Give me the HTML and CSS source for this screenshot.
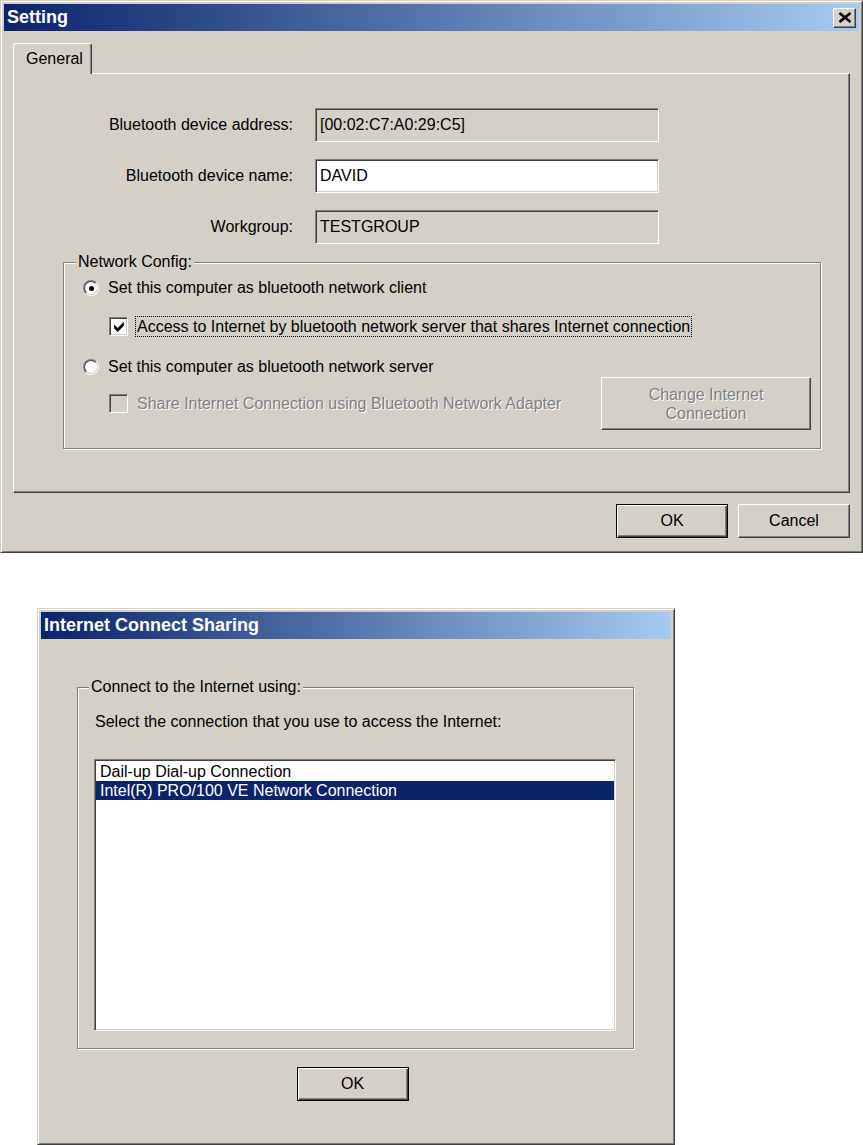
FILE: index.html
```html
<!DOCTYPE html>
<html lang="en">
<head>
  <meta charset="UTF-8" />
  <title>Setting</title>
  <link rel="stylesheet" href="styles.css">
</head>
<body>

  <!-- Setting dialog -->
  <div class="window setting">
    <div class="titlebar">
      <span class="title">Setting</span>
      <button class="close-btn" aria-label="Close">
        <svg width="14" height="11" viewBox="0 0 14 11">
          <path d="M1.5 1 L12.5 10 M12.5 1 L1.5 10" stroke="#000" stroke-width="2.6" fill="none"/>
        </svg>
      </button>
    </div>

    <div class="dialog-body">
      <div class="tabs">
        <div class="tab active">General</div>
      </div>

      <div class="tab-panel">
        <div class="fields">
          <label>Bluetooth device address:</label>
          <div class="field readonly">[00:02:C7:A0:29:C5]</div>

          <label>Bluetooth device name:</label>
          <div class="field">DAVID</div>

          <label>Workgroup:</label>
          <div class="field readonly">TESTGROUP</div>
        </div>

        <div class="group network">
          <div class="group-label">Network Config:</div>

          <div class="option first">
            <span class="radio checked"><span class="radio-inner"></span></span>
            <span>Set this computer as bluetooth network client</span>
          </div>

          <div class="option sub">
            <span class="check">
              <svg width="10" height="11" viewBox="0 0 7 8">
                <polygon points="0,2.5 2.5,5 7,0.5 7,3.5 2.5,8 0,5.5" fill="#000"/>
              </svg>
            </span>
            <span class="focus">Access to Internet by bluetooth network server that shares Internet connection</span>
          </div>

          <div class="option second">
            <span class="radio"><span class="radio-inner"></span></span>
            <span>Set this computer as bluetooth network server</span>
          </div>

          <div class="server-row">
            <div class="option disabled">
              <span class="check off"></span>
              <span class="dim">Share Internet Connection using Bluetooth Network Adapter</span>
            </div>
            <button class="btn wide" disabled><span class="dim">Change Internet<br>Connection</span></button>
          </div>
        </div>
      </div>

      <div class="dialog-buttons">
        <button class="btn default">OK</button>
        <button class="btn">Cancel</button>
      </div>
    </div>
  </div>

  <!-- Internet Connect Sharing dialog -->
  <div class="window sharing">
    <div class="titlebar">
      <span class="title">Internet Connect Sharing</span>
    </div>

    <div class="dialog-body">
      <div class="group connect">
        <div class="group-label">Connect to the Internet using:</div>
        <p class="hint">Select the connection that you use to access the Internet:</p>
        <ul class="listbox">
          <li>Dail-up Dial-up Connection</li>
          <li class="selected">Intel(R) PRO/100 VE Network Connection</li>
        </ul>
      </div>

      <div class="ok-row">
        <button class="btn default">OK</button>
      </div>
    </div>
  </div>

</body>
</html>
```

FILE: styles.css
```css
* {
  box-sizing: border-box;
}

body {
  margin: 0;
  background: #fff;
  font-family: 'Liberation Sans', Arial, sans-serif;
  font-size: 16px;
  color: #000;
}

/* window frame */
.window {
  display: flex;
  flex-direction: column;
  background: #d4d0c8;
  border: 1px solid;
  border-color: #d4d0c8 #404040 #404040 #d4d0c8;
  box-shadow: inset 1px 1px 0 #fff, inset -1px -1px 0 #808080;
  padding: 3px;
}

.setting {
  width: 863px;
  height: 553px;
}

.sharing {
  width: 638px;
  height: 537px;
  margin: 55px 0 0 37px;
}

.titlebar {
  flex: none;
  height: 27px;
  display: flex;
  align-items: center;
  justify-content: space-between;
  padding: 0 3px;
  background: linear-gradient(to right, #0a246a, #a6caf0);
  color: #fff;
  font-weight: bold;
  font-size: 18px;
}

.close-btn {
  width: 23px;
  height: 20px;
  padding: 0;
  display: flex;
  align-items: center;
  justify-content: center;
  background: #d4d0c8;
  border: 1px solid;
  border-color: #fff #404040 #404040 #fff;
  box-shadow: inset -1px -1px 0 #808080;
}

.dialog-body {
  flex: 1;
  display: flex;
  flex-direction: column;
}

.setting .dialog-body {
  padding: 12px 9px 0 9px;
}

/* tabs */
.tabs {
  display: flex;
}

.tab {
  position: relative;
  z-index: 1;
  height: 31px;
  margin-bottom: -1px;
  padding: 0 8px 0 12px;
  line-height: 30px;
  background: #d4d0c8;
  border: 1px solid;
  border-bottom: none;
  border-color: #fff #404040 transparent #fff;
  border-radius: 3px 3px 0 0;
  box-shadow: inset -1px 0 0 #808080;
}

.tab-panel {
  height: 420px;
  padding: 34px 0 0 0;
  border: 1px solid;
  border-color: #fff #404040 #404040 #fff;
  box-shadow: inset -1px -1px 0 #808080;
}

.fields {
  display: grid;
  grid-template-columns: 279px 344px;
  grid-auto-rows: 34px;
  column-gap: 22px;
  row-gap: 17px;
  align-items: center;
}

.fields label {
  text-align: right;
}

.field {
  height: 34px;
  padding: 0 4px;
  line-height: 31px;
  background: #fff;
  border: 1px solid;
  border-color: #808080 #fff #fff #808080;
  box-shadow: inset 1px 1px 0 #404040, inset -1px -1px 0 #d4d0c8;
}

.field.readonly {
  background: #d4d0c8;
}

/* group boxes */
.group {
  border: 1px solid #808080;
  box-shadow: inset 1px 1px 0 #fff, 1px 1px 0 #fff;
}

.group-label {
  display: table;
  margin-top: -10px;
  padding: 0 2px;
  line-height: 18px;
  background: #d4d0c8;
}

.network {
  margin: 18px 28px 0 49px;
  padding: 0 9px 18px 19px;
}

.network .group-label {
  margin-left: -7px;
}

.option {
  display: flex;
  align-items: center;
  height: 20px;
}

.option.first {
  margin-top: 7px;
}

.option.sub {
  margin: 18px 0 0 26px;
}

.option.second {
  margin-top: 21px;
}

.server-row {
  display: flex;
  align-items: center;
  justify-content: space-between;
  height: 53px;
  padding-left: 26px;
}

.option.disabled .dim {
  padding-left: 2px;
}

.radio {
  flex: none;
  width: 16px;
  height: 16px;
  margin-right: 9px;
  border-radius: 50%;
  border: 1px solid;
  border-color: #808080 #fff #fff #808080;
}

.radio-inner {
  display: flex;
  align-items: center;
  justify-content: center;
  width: 100%;
  height: 100%;
  border-radius: 50%;
  border: 1px solid;
  border-color: #404040 #d4d0c8 #d4d0c8 #404040;
  background: #fff;
}

.radio.checked .radio-inner::after {
  content: "";
  width: 5px;
  height: 5px;
  border-radius: 50%;
  background: #000;
}

.check {
  flex: none;
  display: flex;
  align-items: center;
  justify-content: center;
  width: 19px;
  height: 19px;
  margin-right: 7px;
  background: #fff;
  border: 1px solid;
  border-color: #808080 #fff #fff #808080;
  box-shadow: inset 1px 1px 0 #404040, inset -1px -1px 0 #d4d0c8;
}

.check.off {
  background: #d4d0c8;
}

.focus {
  padding: 0 1px;
  line-height: 19px;
  border: 1px dotted #000;
}

.dim {
  color: #808080;
  text-shadow: 1px 1px 0 #fff;
}

/* buttons */
.btn {
  font: inherit;
  color: #000;
  width: 112px;
  height: 34px;
  padding: 0;
  background: #d4d0c8;
  border: 1px solid;
  border-color: #fff #404040 #404040 #fff;
  box-shadow: inset -1px -1px 0 #808080;
}

.btn.default {
  border: 1px solid #000;
  box-shadow: inset 1px 1px 0 #fff, inset -1px -1px 0 #404040, inset -2px -2px 0 #808080;
}

.btn.wide {
  width: 210px;
  height: 53px;
  line-height: 19px;
}

.dialog-buttons {
  display: flex;
  justify-content: flex-end;
  gap: 10px;
  margin-top: 11px;
}

/* sharing dialog */
.sharing .dialog-body {
  padding: 48px 37px 0 36px;
}

.connect {
  padding: 0 17px 17px 16px;
}

.connect .group-label {
  margin-left: -5px;
}

.hint {
  margin: 16px 0 0 1px;
  line-height: 20px;
}

.listbox {
  list-style: none;
  margin: 27px 0 0 0;
  padding: 1px 0;
  height: 272px;
  background: #fff;
  border: 1px solid;
  border-color: #808080 #fff #fff #808080;
  box-shadow: inset 1px 1px 0 #404040, inset -1px -1px 0 #d4d0c8;
}

.listbox li {
  height: 19px;
  line-height: 19px;
  margin: 0 1px;
  padding-left: 4px;
}

.listbox li:first-child {
  margin-top: 1px;
}

.listbox .selected {
  background: #0a246a;
  color: #fff;
}

.ok-row {
  display: flex;
  justify-content: center;
  margin-top: 18px;
  padding-right: 6px;
}
```
